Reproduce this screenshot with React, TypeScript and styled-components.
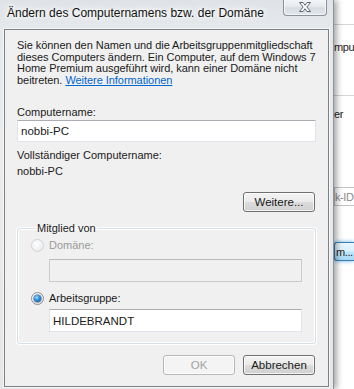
import React from "react";
import styled, { createGlobalStyle } from "styled-components";

const Global = createGlobalStyle`
  html, body { margin: 0; padding: 0; background: #ffffff; }
  body { width: 354px; height: 389px; overflow: hidden; font-family: "Liberation Sans", Arial, sans-serif; }
  #root { width: 354px; height: 389px; }
`;

const Screen = styled.div`
  display: flex;
  width: 354px;
  height: 389px;
  overflow: hidden;
  background: #ffffff;
`;

const Dialog = styled.div`
  position: relative;
  z-index: 2;
  width: 334px;
  flex: none;
  display: flex;
  flex-direction: column;
  background: linear-gradient(180deg, #dfe3e7 0%, #e6e9ec 8%, #e9ebed 40%, #e4e6e8 100%);
  border-right: 1px solid #8e9296;
  box-sizing: border-box;
  box-shadow: 3px 0 6px rgba(0, 0, 0, 0.35);
`;

const TitleBar = styled.div`
  height: 29px;
  flex: none;
  display: flex;
  align-items: flex-start;
  justify-content: space-between;
  padding-left: 7px;
  padding-right: 6px;
`;

const Title = styled.div`
  margin-top: 5px;
  font-size: 12px;
  line-height: 16px;
  color: #111;
  text-shadow: 0 0 8px #ffffff, 0 0 8px #ffffff, 0 0 4px #ffffff;
`;

const CloseButton = styled.div`
  width: 44px;
  height: 17px;
  margin-top: -1px;
  box-sizing: border-box;
  border: 1px solid #8a9099;
  border-top: none;
  border-radius: 0 0 4px 4px;
  background: linear-gradient(180deg, #f4f6f8 0%, #e8ebee 45%, #d9dde2 55%, #e2e6ea 100%);
  box-shadow: inset 0 0 0 1px rgba(255, 255, 255, 0.7);
  display: flex;
  align-items: center;
  justify-content: center;
`;

const Client = styled.div`
  margin: 0 4px 2px 4px;
  flex: 1;
  display: flex;
  flex-direction: column;
  background: #f0f0f0;
  border: 1px solid #7d8186;
  box-shadow: 0 0 0 1px rgba(255, 255, 255, 0.6);
  padding: 10px 12px 0 12px;
  font-size: 11px;
  color: #1a1a1a;
`;

const Description = styled.p`
  margin: 0;
  font-size: 11px;
  line-height: 11.6px;
  letter-spacing: -0.05px;
  white-space: nowrap;
`;

const Link = styled.a`
  color: #0066cc;
  text-decoration: underline;
`;

const Label = styled.div<{ $mt: number; $disabled?: boolean }>`
  margin-top: ${(p) => p.$mt}px;
  font-size: 11px;
  line-height: 13px;
  color: ${(p) => (p.$disabled ? "#9a9a9a" : "#1a1a1a")};
`;

const TextBox = styled.div<{ $mt: number; $disabled?: boolean; $h?: number }>`
  margin-top: ${(p) => p.$mt}px;
  height: ${(p) => p.$h ?? 22}px;
  box-sizing: border-box;
  border: 1px solid ${(p) => (p.$disabled ? "#c9cbcd" : "#e2e3ea")};
  border-top-color: ${(p) => (p.$disabled ? "#b9bbbd" : "#abadb3")};
  background: ${(p) => (p.$disabled ? "#f0f0f0" : "#ffffff")};
  display: flex;
  align-items: center;
  padding-left: 3px;
  font-size: 11.5px;
  color: #1a1a1a;
`;

const ButtonRow = styled.div<{ $mt: number }>`
  margin-top: ${(p) => p.$mt}px;
  display: flex;
  justify-content: flex-end;
  gap: 8px;
  padding-right: 1px;
`;

const Button = styled.div<{ $disabled?: boolean }>`
  width: 72px;
  height: 20px;
  box-sizing: border-box;
  border-radius: 3px;
  border: 1px solid ${(p) => (p.$disabled ? "#b5b9bc" : "#707070")};
  background: ${(p) =>
    p.$disabled
      ? "#f4f4f4"
      : "linear-gradient(180deg, #f3f3f3 0%, #ebebeb 48%, #dcdcdc 52%, #d0d0d0 100%)"};
  box-shadow: inset 0 0 0 1px rgba(255, 255, 255, 0.75);
  display: flex;
  align-items: center;
  justify-content: center;
  font-size: 11.5px;
  color: ${(p) => (p.$disabled ? "#a3a3a3" : "#1a1a1a")};
`;

const Group = styled.fieldset`
  margin: 10px 0 0 0;
  padding: 0 13px 11px 13px;
  border: 1px solid #d5dfe5;
  border-radius: 3px;
  box-shadow: inset 0 0 0 1px #ffffff, 0 0 0 1px #ffffff;
  min-width: 0;
`;

const Legend = styled.legend`
  padding: 0 2px 0 2px;
  margin-left: 4px;
  font-size: 11px;
  line-height: 13px;
  color: #1a1a1a;
`;

const RadioRow = styled.div<{ $mt: number; $disabled?: boolean }>`
  margin-top: ${(p) => p.$mt}px;
  display: flex;
  align-items: center;
  gap: 5px;
  font-size: 11px;
  line-height: 13px;
  color: ${(p) => (p.$disabled ? "#9a9a9a" : "#1a1a1a")};
`;

const RadioCircle = styled.span<{ $checked?: boolean; $disabled?: boolean }>`
  width: 13px;
  height: 13px;
  box-sizing: border-box;
  border-radius: 50%;
  border: 1px solid ${(p) => (p.$disabled ? "#d0d3d6" : "#8e8f8f")};
  background: ${(p) =>
    p.$disabled
      ? "radial-gradient(circle at 40% 35%, #ffffff 0%, #eef0f2 60%, #e2e5e8 100%)"
      : "radial-gradient(circle at 40% 35%, #ffffff 0%, #e8e8e8 70%, #d4d4d4 100%)"};
  display: flex;
  align-items: center;
  justify-content: center;
  flex: none;
  &::after {
    content: "";
    display: ${(p) => (p.$checked ? "block" : "none")};
    width: 7px;
    height: 7px;
    border-radius: 50%;
    background: radial-gradient(circle at 40% 35%, #9ce0ff 0%, #2a8ad4 45%, #0d4a86 100%);
    box-shadow: 0 0 0 0.5px #1d4f7a;
  }
`;

const Indented = styled.div<{ $mt: number }>`
  margin-top: ${(p) => p.$mt}px;
  margin-left: 18px;
`;

const BackWindow = styled.div`
  flex: 1;
  display: flex;
  flex-direction: column;
  background: #ffffff;
  font-size: 11px;
  letter-spacing: -0.4px;
  color: #222;
  overflow: hidden;
`;

const BackRule = styled.div<{ $mt: number }>`
  margin-top: ${(p) => p.$mt}px;
  height: 1px;
  background: #d6d6d6;
`;

const BackText = styled.div<{ $mt: number }>`
  margin-top: ${(p) => p.$mt}px;
  line-height: 13px;
  white-space: nowrap;
`;

const BackField = styled.div<{ $mt: number }>`
  margin-top: ${(p) => p.$mt}px;
  height: 17px;
  border: 1px solid #c2c4c7;
  border-right: none;
  display: flex;
  align-items: center;
  white-space: nowrap;
  color: #8a8a8a;
`;

const BackButton = styled.div<{ $mt: number }>`
  margin-top: ${(p) => p.$mt}px;
  height: 17px;
  border: 1px solid #3c7fb1;
  border-right: none;
  border-radius: 3px 0 0 3px;
  background: linear-gradient(180deg, #eaf6fd 0%, #d9f0fc 48%, #bee6fd 52%, #a7d9f5 100%);
  box-shadow: 0 0 4px #5fb4e8;
  display: flex;
  align-items: center;
  padding-left: 1px;
  white-space: nowrap;
`;

const CloseGlyph = () => (
  <svg width="16" height="12" viewBox="0 0 16 12">
    <path
      d="M2.5 1.5 H6 L8 4.3 L10 1.5 H13.5 L9.9 6 L13.5 10.5 H10 L8 7.7 L6 10.5 H2.5 L6.1 6 Z"
      fill="#ffffff"
      stroke="#5d6670"
      strokeWidth="1"
      strokeLinejoin="round"
    />
  </svg>
);

export default function App() {
  return (
    <>
      <Global />
      <Screen>
        <Dialog>
          <TitleBar>
            <Title>Ändern des Computernamens bzw. der Domäne</Title>
            <CloseButton>
              <CloseGlyph />
            </CloseButton>
          </TitleBar>
          <Client>
            <Description>
              Sie können den Namen und die Arbeitsgruppenmitgliedschaft
              <br />
              dieses Computers ändern. Ein Computer, auf dem Windows 7
              <br />
              Home Premium ausgeführt wird, kann einer Domäne nicht
              <br />
              beitreten. <Link href="#">Weitere Informationen</Link>
            </Description>
            <Label $mt={20}>Computername:</Label>
            <TextBox $mt={1}>nobbi-PC</TextBox>
            <Label $mt={7}>Vollständiger Computername:</Label>
            <Label $mt={3}>nobbi-PC</Label>
            <ButtonRow $mt={14}>
              <Button>Weitere...</Button>
            </ButtonRow>
            <Group>
              <Legend>Mitglied von</Legend>
              <RadioRow $mt={4} $disabled>
                <RadioCircle $disabled />
                Domäne:
              </RadioRow>
              <Indented $mt={7}>
                <TextBox $mt={0} $h={23} $disabled />
              </Indented>
              <RadioRow $mt={10}>
                <RadioCircle $checked />
                Arbeitsgruppe:
              </RadioRow>
              <Indented $mt={4}>
                <TextBox $mt={0} $h={23}>HILDEBRANDT</TextBox>
              </Indented>
            </Group>
            <ButtonRow $mt={11}>
              <Button $disabled>OK</Button>
              <Button>Abbrechen</Button>
            </ButtonRow>
          </Client>
        </Dialog>
        <BackWindow>
          <BackRule $mt={24} />
          <BackText $mt={16}>mpu</BackText>
          <BackRule $mt={41} />
          <BackText $mt={12}>er</BackText>
          <BackField $mt={66}>k-ID</BackField>
          <BackButton $mt={36}>m...</BackButton>
        </BackWindow>
      </Screen>
    </>
  );
}
